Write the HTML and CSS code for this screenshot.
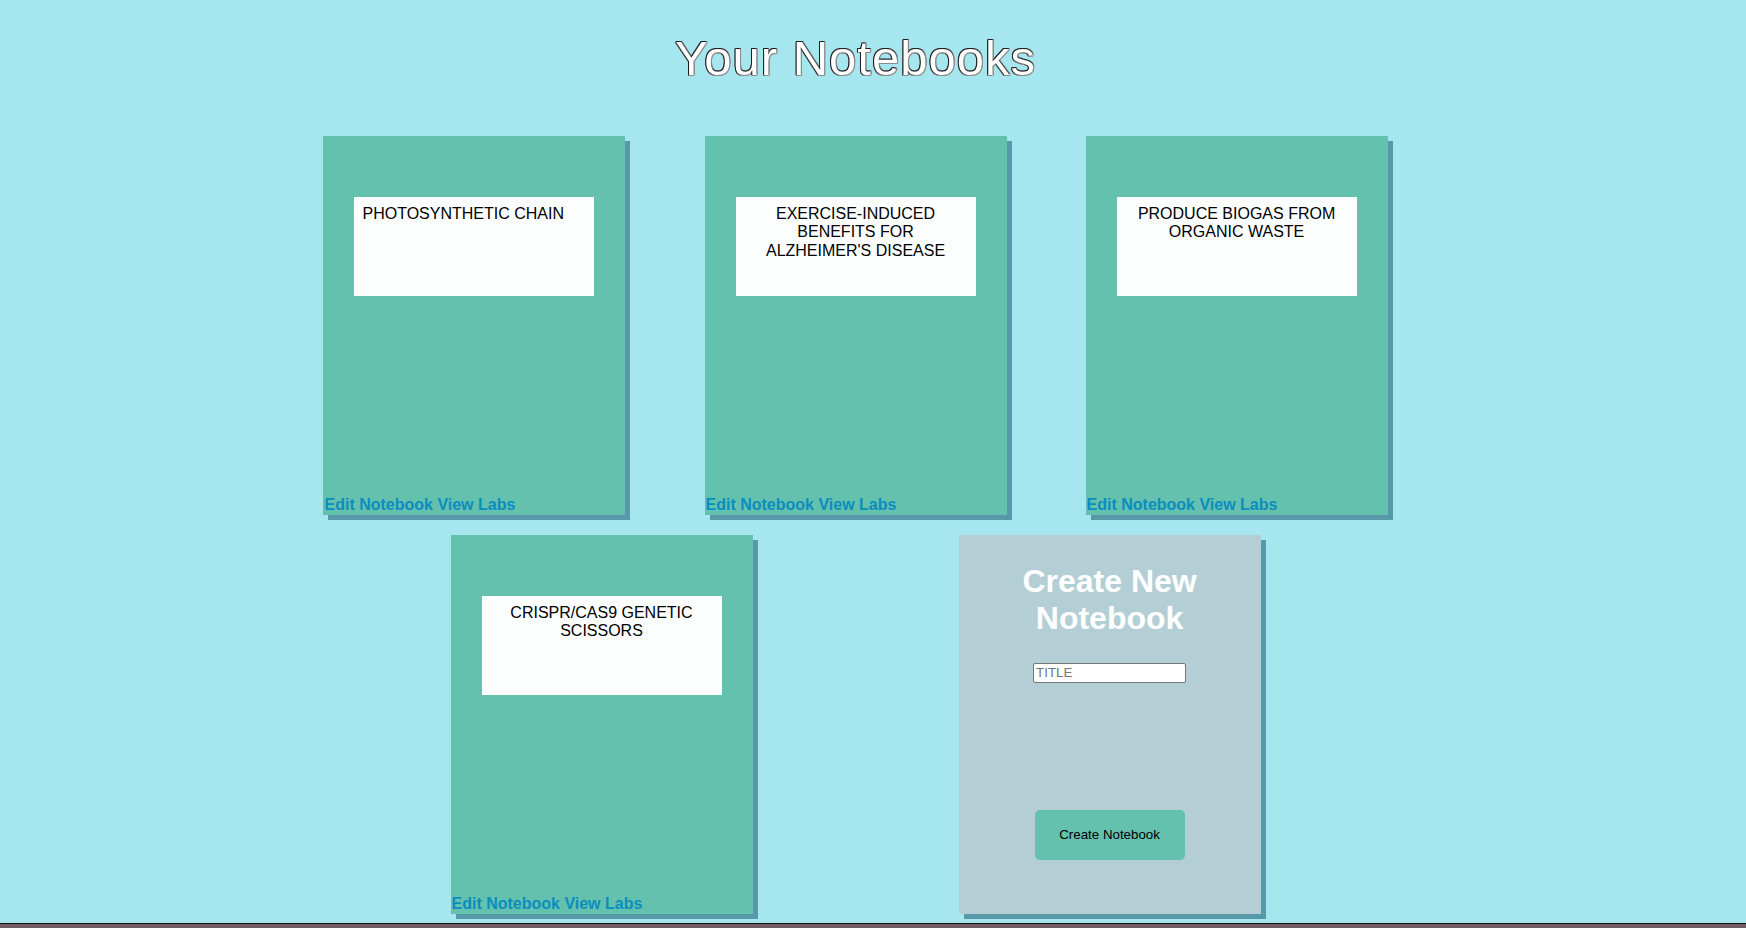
FILE: index.html
```html
<!DOCTYPE html>
<html lang="en">
<head>
<meta charset="utf-8">
<title>Your Notebooks</title>
<link rel="stylesheet" href="styles.css">
</head>
<body>
<div class="wrap">
  <h1 class="page-title">Your Notebooks</h1>
  <main class="grid">
    <div class="row">
      <section class="card">
        <div class="label label-left">PHOTOSYNTHETIC CHAIN</div>
        <div class="links"><a href="#">Edit Notebook</a> <a href="#">View Labs</a></div>
      </section>
      <section class="card">
        <div class="label">EXERCISE-INDUCED BENEFITS FOR ALZHEIMER'S DISEASE</div>
        <div class="links"><a href="#">Edit Notebook</a> <a href="#">View Labs</a></div>
      </section>
      <section class="card">
        <div class="label">PRODUCE BIOGAS FROM ORGANIC WASTE</div>
        <div class="links"><a href="#">Edit Notebook</a> <a href="#">View Labs</a></div>
      </section>
    </div>
    <div class="row">
      <section class="card">
        <div class="label">CRISPR/CAS9 GENETIC SCISSORS</div>
        <div class="links"><a href="#">Edit Notebook</a> <a href="#">View Labs</a></div>
      </section>
      <section class="card card-create">
        <h2 class="create-title">Create New Notebook</h2>
        <input class="title-input" type="text" placeholder="TITLE">
        <button class="create-btn" type="button">Create Notebook</button>
      </section>
    </div>
  </main>
</div>
<div class="footer-strip"></div>
</body>
</html>
```
FILE: styles.css
```css
html {
  overflow: hidden;
}
body {
  margin: 0;
  background: #a6e6ef;
  font-family: "Liberation Sans", Arial, sans-serif;
}
.wrap {
  width: 70%;
  margin-left: 14%;
}
.page-title {
  margin: 0;
  padding-top: 30px;
  font-size: 49px;
  font-weight: normal;
  letter-spacing: 1px;
  line-height: normal;
  color: #ffffff;
  text-align: center;
  text-shadow: -1px 0 0 #1e1e1e, 0 -1px 0 #1e1e1e, 1px 0 0 #8a8a8a, 0 1px 0 #8a8a8a, 1px 1px 0 #9a9a9a, -1px -1px 0 #333, 1px -1px 0 #666, -1px 1px 0 #666;
}
.grid {
  display: flex;
  flex-direction: column;
  gap: 20px;
  margin-top: 50px;
}
.row {
  display: flex;
  justify-content: space-evenly;
}
.card {
  width: 302px;
  height: 379px;
  background: #64c1ae;
  box-shadow: 5px 5px 0 #5799a8;
  display: flex;
  flex-direction: column;
  align-items: center;
}
.label {
  box-sizing: border-box;
  width: 240px;
  height: 99px;
  margin-top: 61px;
  padding: 8px 10px 0;
  background: #fcfefe;
  color: #000;
  font-size: 16px;
  line-height: 1.15;
  text-align: center;
}
.label-left {
  text-align: left;
  padding-left: 8px;
}
.links {
  align-self: stretch;
  margin-top: auto;
  padding: 0 0 1px 1px;
  font-size: 16px;
  font-weight: bold;
  line-height: 1.15;
}
.links a {
  color: #0b8dbf;
  text-decoration: none;
}
.card-create {
  background: #b3cfd5;
}
.create-title {
  margin: 28px 0 0;
  font-size: 32px;
  font-weight: bold;
  line-height: 1.15;
  color: #ffffff;
  text-align: center;
}
.title-input {
  box-sizing: border-box;
  width: 153px;
  height: 20px;
  margin-top: 26px;
  padding: 1px 2px;
  border: 1px solid #767676;
  border-radius: 2px;
  background: #fff;
  font-family: "Liberation Sans", Arial, sans-serif;
  font-size: 13.33px;
}
.title-input::placeholder {
  color: #757575;
}
.create-btn {
  width: 150px;
  height: 50px;
  margin-top: 127px;
  border: none;
  border-radius: 5px;
  background: #64c1ae;
  color: #000;
  font-family: "Liberation Sans", Arial, sans-serif;
  font-size: 13.33px;
}
.footer-strip {
  height: 4px;
  margin-top: 9px;
  border-top: 1px solid #111;
  background: #6f5f62;
}
```
